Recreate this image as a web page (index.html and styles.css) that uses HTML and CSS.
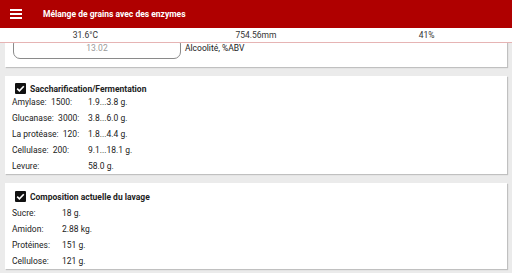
FILE: index.html
```html
<!DOCTYPE html>
<html>

	<head>
		<meta charset="UTF-8">
		<title>Mélange de grains avec des enzymes</title>
		<link rel="stylesheet" href="styles.css">
	</head>

	<body>
		<header class="toolbar">
			<span class="menu"><i></i><i></i><i></i></span>
			<h1>Mélange de grains avec des enzymes</h1>
		</header>
		<div class="status">
			<span>31.6°C</span>
			<span>754.56mm</span>
			<span>41%</span>
		</div>
		<main class="content">
			<section class="card card-abv">
				<div class="field">13.02</div>
				<span class="field-label">Alcoolité, %ABV</span>
			</section>
			<section class="card card-enz">
				<div class="card-title">
					<span class="check"><svg viewBox="0 0 11 11" width="11" height="11"><path d="M2.2 5.6 L4.4 7.8 L8.8 3.2" fill="none" stroke="#fff" stroke-width="1.6"/></svg></span>
					Saccharification/Fermentation
				</div>
				<div class="rows">
					<div class="row"><span>Amylase:&nbsp; 1500:</span><span>1.9...3.8 g.</span></div>
					<div class="row"><span>Glucanase:&nbsp; 3000:</span><span>3.8...6.0 g.</span></div>
					<div class="row"><span>La protéase:&nbsp; 120:</span><span>1.8...4.4 g.</span></div>
					<div class="row"><span>Cellulase:&nbsp; 200:</span><span>9.1...18.1 g.</span></div>
					<div class="row"><span>Levure:</span><span>58.0 g.</span></div>
				</div>
			</section>
			<section class="card card-mash">
				<div class="card-title">
					<span class="check"><svg viewBox="0 0 11 11" width="11" height="11"><path d="M2.2 5.6 L4.4 7.8 L8.8 3.2" fill="none" stroke="#fff" stroke-width="1.6"/></svg></span>
					Composition actuelle du lavage
				</div>
				<div class="rows">
					<div class="row"><span>Sucre:</span><span>18 g.</span></div>
					<div class="row"><span>Amidon:</span><span>2.88 kg.</span></div>
					<div class="row"><span>Protéines:</span><span>151 g.</span></div>
					<div class="row"><span>Cellulose:</span><span>121 g.</span></div>
				</div>
			</section>
		</main>
	</body>

</html>
```

FILE: styles.css
```css
* {
	margin: 0;
	padding: 0;
	box-sizing: border-box;
}

body {
	width: 512px;
	height: 273px;
	overflow: hidden;
	background: #ebebeb;
	font-family: Roboto, "Liberation Sans", sans-serif;
	font-size: 8.5px;
	color: #222;
}

.toolbar {
	height: 28px;
	background: #af0000;
	display: flex;
	align-items: center;
	color: #fff;
}

.toolbar .menu {
	width: 12px;
	margin: 0 21px 0 10px;
	display: flex;
	flex-direction: column;
	gap: 2px;
}

.toolbar .menu i {
	display: block;
	height: 2px;
	background: #fff;
}

.toolbar h1 {
	font-size: 8.5px;
	font-weight: 700;
}

.status {
	height: 15px;
	background: #fff;
	border-bottom: 1px solid #e6b4b4;
	display: grid;
	grid-template-columns: 1fr 1fr 1fr;
	text-align: center;
	line-height: 14px;
	color: #333;
}

.content {
	height: 230px;
	overflow: hidden;
}

.card {
	background: #fff;
	margin: 0 5px 9px;
	box-shadow: 1px 1px 1px rgba(0, 0, 0, 0.18);
}

.card-abv {
	margin-top: -14px;
	padding: 8px;
	display: flex;
	align-items: center;
	gap: 4px;
}

.field {
	width: 168px;
	height: 22px;
	border: 1px solid #8a8a8a;
	border-radius: 7px;
	text-align: center;
	line-height: 20px;
	color: #999;
}

.card-title {
	display: flex;
	align-items: center;
	height: 11px;
	margin-left: 10px;
	font-weight: 700;
	gap: 4px;
}

.check {
	width: 11px;
	height: 11px;
	background: #111;
	border-radius: 1px;
	display: block;
}

.check svg {
	display: block;
}

.card-enz {
	padding-top: 7px;
}

.card-mash {
	padding: 8px 0 0;
}

.rows {
	padding-left: 7px;
}

.row {
	display: grid;
	height: 16px;
	line-height: 16px;
}

.card-enz .row {
	grid-template-columns: 76px auto;
}

.card-mash .rows {
	padding-top: 3px;
}

.card-mash .row {
	grid-template-columns: 50px auto;
}
```
